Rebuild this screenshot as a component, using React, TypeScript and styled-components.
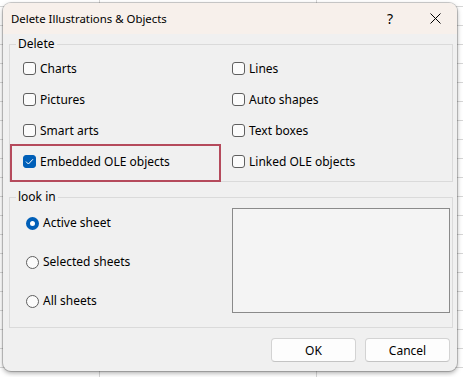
import React from "react";
import styled, { createGlobalStyle } from "styled-components";

const Global = createGlobalStyle`
  html, body { margin: 0; padding: 0; }
  body {
    width: 463px;
    height: 377px;
    overflow: hidden;
    font-family: "Segoe UI", "Noto Sans", sans-serif;
    font-size: 12px;
    color: #000;
  }
`;

const Desktop = styled.div`
  width: 463px;
  height: 377px;
  box-sizing: border-box;
  padding: 3px 6px 6px 3px;
  background-color: #ffffff;
  background-image: linear-gradient(to bottom, #d6d6d6 1px, transparent 1px),
    linear-gradient(to right, #d6d6d6 1px, transparent 1px);
  background-size: 100% 19px, 217px 100%;
  background-position: 0 6px, 99px 0;
`;

const Window = styled.div`
  width: 454px;
  height: 368px;
  display: flex;
  flex-direction: column;
  border-radius: 8px;
  overflow: hidden;
  background: #f0f0f0;
  box-shadow: 0 0 0 1px rgba(0, 0, 0, 0.18), 0 2px 5px rgba(0, 0, 0, 0.35);
`;

const TitleBar = styled.div`
  height: 31px;
  flex: none;
  display: flex;
  align-items: center;
  background: #f7f0eb;
  padding-left: 8px;
`;

const Title = styled.div`
  flex: 1;
  font-size: 11.4px;
  line-height: 16px;
`;

const CaptionButton = styled.div<{ $w: number }>`
  width: ${(p) => p.$w}px;
  height: 31px;
  display: flex;
  align-items: center;
  justify-content: center;
  font-size: 14px;
`;

const Body = styled.div`
  flex: 1;
  display: flex;
  flex-direction: column;
  padding: 2px 4px 0 6px;
`;

const Group = styled.fieldset<{ $mt?: number }>`
  margin: ${(p) => p.$mt ?? 0}px 0 0 0;
  padding: 0;
  border: 1px solid #dadada;
  min-width: 0;
`;

const Legend = styled.legend`
  margin-left: 6px;
  padding: 0 2px;
  font-size: 12px;
  line-height: 16px;
`;

const CheckGrid = styled.div`
  display: grid;
  grid-template-columns: 209px 1fr;
  grid-auto-rows: 31px;
  padding: 1px 0 4px 13px;
`;

const Cell = styled.label<{ $highlight?: boolean }>`
  position: relative;
  display: flex;
  align-items: center;
  gap: 4px;
  line-height: 16px;
  &::after {
    content: "";
    display: ${(p) => (p.$highlight ? "block" : "none")};
    position: absolute;
    left: -13px;
    right: 11px;
    top: -2px;
    bottom: -5px;
    border: 2px solid #b54a5c;
  }
`;

const Box = styled.span<{ $checked?: boolean }>`
  width: 13px;
  height: 13px;
  box-sizing: border-box;
  border-radius: 3px;
  border: 1px solid ${(p) => (p.$checked ? "#005fb8" : "#5f5f5f")};
  background: ${(p) => (p.$checked ? "#005fb8" : "#fbfbfb")};
  display: flex;
  align-items: center;
  justify-content: center;
  flex: none;
`;

const LookGrid = styled.div`
  display: grid;
  grid-template-columns: 209px 218px;
  padding: 3px 0 14px 13px;
`;

const RadioList = styled.div`
  display: flex;
  flex-direction: column;
  gap: 19px;
  padding: 5px 0 0 3px;
`;

const RadioRow = styled.label`
  display: flex;
  align-items: center;
  gap: 4px;
  height: 20px;
  line-height: 16px;
`;

const Radio = styled.span<{ $checked?: boolean }>`
  width: 13px;
  height: 13px;
  box-sizing: border-box;
  border-radius: 50%;
  flex: none;
  border: ${(p) => (p.$checked ? "4px solid #005fb8" : "1px solid #5f5f5f")};
  background: ${(p) => (p.$checked ? "#ffffff" : "#fbfbfb")};
`;

const Preview = styled.div`
  height: 105px;
  box-sizing: border-box;
  border: 1px solid #8a8a8a;
  background: #f4f4f4;
`;

const ButtonRow = styled.div`
  display: flex;
  justify-content: flex-end;
  gap: 9px;
  margin-top: 10px;
  padding-right: 3px;
`;

const Button = styled.button`
  width: 85px;
  height: 24px;
  box-sizing: border-box;
  background: #fdfdfd;
  border: 1px solid #d3d3d3;
  border-bottom-color: #c4c4c4;
  border-radius: 4px;
  font-family: inherit;
  font-size: 12px;
  color: #000;
  padding: 0;
`;

const Check = () => (
  <svg width="9" height="7" viewBox="0 0 9 7">
    <path d="M1 3.6 L3.4 6 L8 1.2" fill="none" stroke="#fff" strokeWidth="1" />
  </svg>
);

const CheckItem = ({ label, checked, highlight }: { label: string; checked?: boolean; highlight?: boolean }) => (
  <Cell $highlight={highlight}>
    <Box $checked={checked}>{checked && <Check />}</Box>
    {label}
  </Cell>
);

export default function App() {
  return (
    <>
      <Global />
      <Desktop>
        <Window>
          <TitleBar>
            <Title>Delete Illustrations &amp; Objects</Title>
            <CaptionButton $w={46}>?</CaptionButton>
            <CaptionButton $w={44}>
              <svg width="11" height="11" viewBox="0 0 11 11">
                <path d="M0.5 0.5 L10.5 10.5 M10.5 0.5 L0.5 10.5" stroke="#000" strokeWidth="1" />
              </svg>
            </CaptionButton>
          </TitleBar>
          <Body>
            <Group>
              <Legend>Delete</Legend>
              <CheckGrid>
                <CheckItem label="Charts" />
                <CheckItem label="Lines" />
                <CheckItem label="Pictures" />
                <CheckItem label="Auto shapes" />
                <CheckItem label="Smart arts" />
                <CheckItem label="Text boxes" />
                <CheckItem label="Embedded OLE objects" checked highlight />
                <CheckItem label="Linked OLE objects" />
              </CheckGrid>
            </Group>
            <Group $mt={7}>
              <Legend>look in</Legend>
              <LookGrid>
                <RadioList>
                  <RadioRow><Radio $checked />Active sheet</RadioRow>
                  <RadioRow><Radio />Selected sheets</RadioRow>
                  <RadioRow><Radio />All sheets</RadioRow>
                </RadioList>
                <Preview />
              </LookGrid>
            </Group>
            <ButtonRow>
              <Button>OK</Button>
              <Button>Cancel</Button>
            </ButtonRow>
          </Body>
        </Window>
      </Desktop>
    </>
  );
}
